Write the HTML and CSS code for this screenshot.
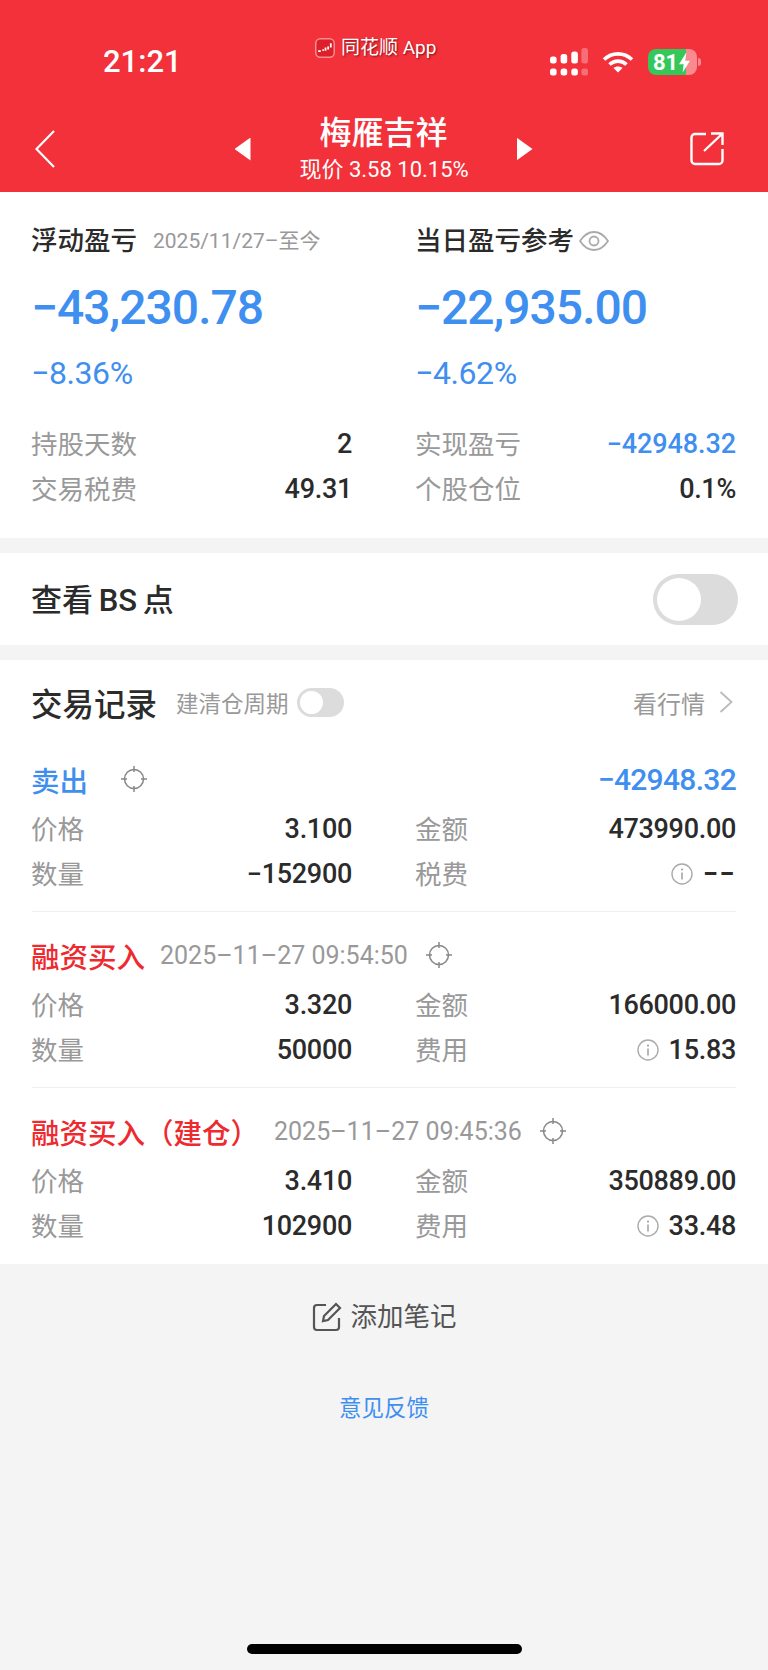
FILE: index.html
```html
<!DOCTYPE html>
<html lang="zh-CN">
  <head>
    <meta charset="UTF-8">
    <title>梅雁吉祥</title>
    <link rel="stylesheet" href="styles.css">
  </head>
  <body>
    <div class="page">
      <header class="top">
        <div class="status">
          <div class="time">21:21</div>
          <div class="source">
            <svg class="logo" viewBox="0 0 19 19">
              <rect x="0.7" y="0.7" width="17.6" height="17.6" rx="4.5" fill="#dc1f29" stroke="#f58f94" stroke-width="1.4"/>
              <path d="M3 12.5h2.5M7 11.5h1.5M10 9v3M12.5 8v3M15 5v4" stroke="#fff" stroke-width="1.7" fill="none"/>
            </svg>
            <span>同花顺 App</span>
          </div>
          <div class="sys">
            <svg class="signal" viewBox="0 0 38 28" fill="#fff">
              <rect x="0" y="8.5" width="6.6" height="7" rx="2.5"/>
              <rect x="10.6" y="6" width="6.6" height="9.5" rx="2.5"/>
              <rect x="21.3" y="3.5" width="6.6" height="12" rx="2.5"/>
              <rect x="31.4" y="0" width="6.6" height="15.5" rx="2.5" opacity="0.3"/>
              <rect x="0" y="20.5" width="6.6" height="7" rx="2.5"/>
              <rect x="10.6" y="20.5" width="6.6" height="7" rx="2.5"/>
              <rect x="21.3" y="20.5" width="6.6" height="7" rx="2.5"/>
              <rect x="31.4" y="20.5" width="6.6" height="7" rx="2.5" opacity="0.3"/>
            </svg>
            <svg class="wifi" viewBox="0 0 32 22" fill="none" stroke="#fff" stroke-width="3.6">
              <path d="M2 8.5C10 1 22 1 30 8.5"/>
              <path d="M7.5 13.5C12.5 9 19.5 9 24.5 13.5"/>
              <path d="M16 21.5 11.5 17C14 15 18 15 20.5 17Z" fill="#fff" stroke="none"/>
            </svg>
            <div class="battery">
              <div class="cell">
                <span>81</span>
                <svg class="bolt" viewBox="0 0 12 22"><path d="M8 0 0 13h5l-1 9 8-13H7z" fill="#fff"/></svg>
              </div>
              <div class="nub"></div>
            </div>
          </div>
        </div>
        <nav class="nav">
          <svg class="back" viewBox="0 0 20 38" fill="none" stroke="#fff" stroke-width="2.2">
            <path d="M19 1 1.5 19 19 37"/>
          </svg>
          <div class="stock">
            <div class="tri tri-l"></div>
            <div class="stock-name">
              <div class="name">梅雁吉祥</div>
              <div class="price">现价 3.58 10.15%</div>
            </div>
            <div class="tri tri-r"></div>
          </div>
          <svg class="share" viewBox="0 0 34 34" fill="none" stroke="#fff" stroke-width="2.4">
            <path d="M16 2H5a3.5 3.5 0 0 0-3.5 3.5v23A3.5 3.5 0 0 0 5 32h24a3.5 3.5 0 0 0 3.5-3.5V17"/>
            <path d="M14 19 32 2M21 1.5h11.5V13"/>
          </svg>
        </nav>
      </header>

      <section class="card summary">
        <div class="cols">
          <div>
            <div class="sum-title">浮动盈亏<span class="sum-date">2025/11/27–至今</span></div>
            <div class="big blue">−43,230.78</div>
            <div class="pct blue">−8.36%</div>
          </div>
          <div>
            <div class="sum-title">当日盈亏参考
              <svg class="eye" viewBox="0 0 30 20" fill="none" stroke="#aaa" stroke-width="1.8">
                <path d="M1 10C6 2.5 10 1 15 1s9 1.5 14 9c-5 7.5-9 9-14 9S6 17.5 1 10Z"/>
                <circle cx="15" cy="10" r="4.5"/>
              </svg>
            </div>
            <div class="big blue">−22,935.00</div>
            <div class="pct blue">−4.62%</div>
          </div>
        </div>
        <div class="cols grid-rows">
          <div class="row"><span class="label">持股天数</span><span class="val">2</span></div>
          <div class="row"><span class="label">实现盈亏</span><span class="val blue">−42948.32</span></div>
          <div class="row"><span class="label">交易税费</span><span class="val">49.31</span></div>
          <div class="row"><span class="label">个股仓位</span><span class="val">0.1%</span></div>
        </div>
      </section>

      <section class="card bs">
        <span class="bs-label">查看 BS 点</span>
        <div class="switch"><div class="knob"></div></div>
      </section>

      <section class="card records">
        <div class="rec-head">
          <span class="rec-title">交易记录</span>
          <span class="rec-sub">建清仓周期</span>
          <div class="switch switch-sm"><div class="knob"></div></div>
          <span class="rec-link">看行情</span>
          <svg class="more" viewBox="0 0 14 22" fill="none" stroke="#bbb" stroke-width="1.8"><path d="M1.5 1 12.5 11 1.5 21"/></svg>
        </div>

        <div class="trade">
          <div class="trade-head">
            <span class="trade-type blue">卖出</span>
            <svg class="target target-wide" viewBox="0 0 26 26"><use href="#target"/></svg>
            <span class="trade-pl blue">−42948.32</span>
          </div>
          <div class="cols">
            <div class="row"><span class="label">价格</span><span class="val">3.100</span></div>
            <div class="row"><span class="label">金额</span><span class="val">473990.00</span></div>
            <div class="row"><span class="label">数量</span><span class="val">−152900</span></div>
            <div class="row"><span class="label">税费</span><span class="val val-info"><svg class="info" viewBox="0 0 22 22"><use href="#info"/></svg><b class="none">−−</b></span></div>
          </div>
        </div>

        <div class="trade">
          <div class="trade-head">
            <span class="trade-type red">融资买入</span>
            <span class="trade-time">2025–11–27 09:54:50</span>
            <svg class="target" viewBox="0 0 26 26"><use href="#target"/></svg>
          </div>
          <div class="cols">
            <div class="row"><span class="label">价格</span><span class="val">3.320</span></div>
            <div class="row"><span class="label">金额</span><span class="val">166000.00</span></div>
            <div class="row"><span class="label">数量</span><span class="val">50000</span></div>
            <div class="row"><span class="label">费用</span><span class="val val-info"><svg class="info" viewBox="0 0 22 22"><use href="#info"/></svg>15.83</span></div>
          </div>
        </div>

        <div class="trade">
          <div class="trade-head">
            <span class="trade-type red">融资买入（建仓）</span>
            <span class="trade-time">2025–11–27 09:45:36</span>
            <svg class="target" viewBox="0 0 26 26"><use href="#target"/></svg>
          </div>
          <div class="cols">
            <div class="row"><span class="label">价格</span><span class="val">3.410</span></div>
            <div class="row"><span class="label">金额</span><span class="val">350889.00</span></div>
            <div class="row"><span class="label">数量</span><span class="val">102900</span></div>
            <div class="row"><span class="label">费用</span><span class="val val-info"><svg class="info" viewBox="0 0 22 22"><use href="#info"/></svg>33.48</span></div>
          </div>
        </div>
      </section>

      <footer class="foot">
        <div class="note">
          <svg class="note-icon" viewBox="0 0 30 30" fill="none" stroke="#555" stroke-width="2.2">
            <path d="M14 3H5a3 3 0 0 0-3 3v19a3 3 0 0 0 3 3h19a3 3 0 0 0 3-3v-9"/>
            <path d="M12 14 24 2l4 4-12 12-5 1z"/>
          </svg>
          <span>添加笔记</span>
        </div>
        <div class="feedback">意见反馈</div>
        <div class="home"></div>
      </footer>
    </div>

    <svg class="defs" width="0" height="0">
      <defs>
        <g id="target" fill="none" stroke="#888" stroke-width="1.5">
          <circle cx="13" cy="13" r="9.5"/>
          <path d="M13 0v6M13 20v6M0 13h6M20 13h6"/>
        </g>
        <g id="info">
          <circle cx="11" cy="11" r="10" fill="none" stroke="#aaa" stroke-width="1.4"/>
          <path d="M11 9.5v7" stroke="#999" stroke-width="1.4"/>
          <circle cx="11" cy="6.5" r="1" fill="#999"/>
        </g>
      </defs>
    </svg>
  </body>
</html>
```

FILE: styles.css
```css
body {
  margin: 0;
  font-family: Roboto, "Noto Sans CJK SC", sans-serif;
  color: #2b2b2b;
  background: #f4f4f4;
}
.page {
  width: 768px;
  min-height: 1670px;
  display: flex;
  flex-direction: column;
}
.blue { color: #3f8ff0; }
.red { color: #ee2a2f; }
.defs { position: absolute; }

/* red header */
.top {
  height: 192px;
  background: #f3313b;
  color: #fff;
}
.status {
  height: 100px;
  position: relative;
  display: flex;
  align-items: center;
  justify-content: space-between;
  padding: 24px 67px 0 103px;
  box-sizing: border-box;
}
.time {
  font-size: 31px;
  font-weight: 500;
  line-height: 40px;
}
.source {
  position: absolute;
  top: 36px;
  left: 315px;
  display: flex;
  align-items: center;
  gap: 6px;
  font-size: 19px;
  line-height: 24px;
  text-shadow: 1px 1px 2px rgba(90, 0, 0, 0.7);
}
.logo { width: 20px; height: 20px; }
.sys {
  display: flex;
  align-items: center;
  gap: 14px;
}
.signal { width: 38px; height: 28px; }
.wifi { width: 32px; height: 22px; }
.battery {
  display: flex;
  align-items: center;
  gap: 1px;
}
.cell {
  width: 49px;
  height: 26px;
  border-radius: 8px;
  background: linear-gradient(to right, #34c759 78%, #f98a90 78%);
  display: flex;
  align-items: center;
  padding-left: 5px;
  box-sizing: border-box;
  font-size: 22px;
  font-weight: 700;
}
.bolt { width: 11px; height: 21px; margin-left: 1px; }
.nub {
  width: 3px;
  height: 8px;
  border-radius: 0 3px 3px 0;
  background: #f98a90;
}
.nav {
  height: 92px;
  display: flex;
  align-items: center;
  justify-content: space-between;
  padding: 0 44px 0 35px;
}
.back { width: 20px; height: 38px; margin-top: 6px; }
.share { width: 34px; height: 34px; margin-top: 6px; }
.stock {
  display: flex;
  align-items: center;
  gap: 49px;
  margin-left: 22px;
}
.stock-name { text-align: center; width: 168px; }
.name {
  font-size: 32px;
  font-weight: 500;
  line-height: 44px;
  margin-top: 2px;
}
.price {
  font-size: 22px;
  line-height: 28px;
  margin-top: 1px;
  white-space: nowrap;
}
.tri {
  width: 16px;
  height: 23px;
  background: #fff;
  margin-top: 6px;
}
.tri-l { clip-path: polygon(100% 0, 100% 100%, 0 50%); }
.tri-r { clip-path: polygon(0 0, 0 100%, 100% 50%); }

/* cards */
.card { background: #fff; }
.cols {
  display: grid;
  grid-template-columns: 321px 321px;
  column-gap: 63px;
  padding: 0 32px 0 31px;
}
.row {
  display: flex;
  justify-content: space-between;
  align-items: center;
  height: 45px;
}
.label {
  font-size: 26.5px;
  color: #999;
  margin-top: -2px;
}
.val {
  font-size: 27px;
  font-weight: 500;
  letter-spacing: -0.3px;
  color: #2b2b2b;
}
.val.blue { color: #3f8ff0; letter-spacing: -0.1px; }
.val-info {
  display: flex;
  align-items: center;
  gap: 10px;
}
.info { width: 22px; height: 22px; }
.none { font-weight: 700; letter-spacing: 1.5px; }

.summary {
  padding: 29px 0 27px;
}
.sum-title {
  font-size: 26.5px;
  line-height: 40px;
  display: flex;
  align-items: center;
  font-weight: 500;
}
.sum-date {
  font-size: 21px;
  font-weight: 400;
  color: #999;
  margin-left: 16px;
}
.eye { width: 30px; height: 20px; margin-left: 5px; }
.big {
  font-size: 48px;
  font-weight: 500;
  letter-spacing: -1px;
  line-height: 60px;
  margin-top: 17px;
}
.pct {
  font-size: 32px;
  letter-spacing: -0.4px;
  line-height: 40px;
  margin-top: 15px;
}
.grid-rows { margin-top: 28px; }

.bs {
  margin-top: 15px;
  height: 92px;
  display: flex;
  align-items: center;
  justify-content: space-between;
  padding: 0 30px 0 31px;
  font-size: 31px;
  font-weight: 500;
}
.bs-label { margin-top: -3px; word-spacing: -2px; }
.switch {
  width: 85px;
  height: 51px;
  border-radius: 26px;
  background: #dcdcdc;
  padding: 4px;
  box-sizing: border-box;
}
.knob {
  width: 44px;
  height: 43px;
  border-radius: 50%;
  background: #fff;
}
.switch-sm {
  width: 47px;
  height: 29px;
  padding: 3px;
  margin-left: 8px;
}
.switch-sm .knob { width: 23px; height: 23px; }

.records { margin-top: 15px; }
.rec-head {
  display: flex;
  align-items: center;
  height: 40px;
  padding: 22px 35px 14px 31px;
}
.rec-title { font-size: 31.5px; font-weight: 500; }
.rec-sub { font-size: 22.5px; color: #999; margin-left: 19px; }
.rec-link { font-size: 24px; color: #999; margin-left: auto; }
.more { width: 14px; height: 22px; margin-left: 14px; }

.trade {
  padding: 23px 0 16px;
  background: linear-gradient(#f0f0f0, #f0f0f0) 32px 100% / 704px 1px no-repeat;
}
.trade:last-child { background: none; }
.trade-head {
  display: flex;
  align-items: center;
  height: 40px;
  padding: 0 32px 0 31px;
  margin-bottom: 7px;
}
.trade-type { font-size: 28.5px; font-weight: 500; }
.trade-time { font-size: 25px; color: #999; margin-left: 15px; }
.trade-pl { font-size: 30px; font-weight: 500; letter-spacing: -0.7px; margin-left: auto; }
.target { width: 26px; height: 26px; margin-left: 18px; }
.target-wide { margin-left: 33px; }

/* below the cards */
.foot {
  flex: 1;
  display: flex;
  flex-direction: column;
  align-items: center;
}
.note {
  margin-top: 33px;
  display: flex;
  align-items: center;
  gap: 9px;
  font-size: 26.5px;
  line-height: 40px;
  color: #555;
}
.note-icon { width: 30px; height: 30px; }
.feedback {
  margin-top: 56px;
  font-size: 22.5px;
  line-height: 30px;
  color: #3f8ff0;
}
.home {
  margin-top: auto;
  margin-bottom: 16px;
  width: 275px;
  height: 10px;
  border-radius: 5px;
  background: #000;
}
```
